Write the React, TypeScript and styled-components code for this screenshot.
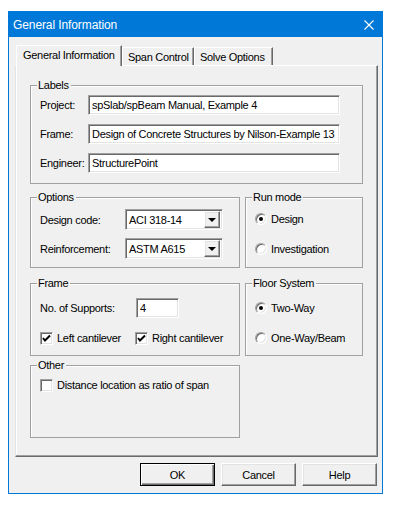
import React from 'react'
import styled, { createGlobalStyle, css } from 'styled-components'

const GlobalStyle = createGlobalStyle`
  body {
    margin: 0;
    background: #ffffff;
    font-family: "Liberation Sans", Arial, sans-serif;
  }
`

const sunken = css`
  box-sizing: border-box;
  border: 1px solid;
  border-color: #a0a0a0 #ffffff #ffffff #a0a0a0;
  box-shadow: inset 1px 1px 0 #696969, inset -1px -1px 0 #e3e3e3;
  background: #ffffff;
`

const raised = css`
  box-sizing: border-box;
  border: 1px solid;
  border-color: #ffffff #696969 #696969 #ffffff;
  box-shadow: inset -1px -1px 0 #a0a0a0, inset 1px 1px 0 #e3e3e3;
  background: #f0f0f0;
`

const Page = styled.div`
  padding: 11px 0 0 8px;
`

const Window = styled.div`
  width: 375px;
  height: 483px;
  box-sizing: border-box;
  border: 1px solid #0078d7;
  background: #f0f0f0;
  display: flex;
  flex-direction: column;
  font-size: 11px;
  letter-spacing: -0.3px;
  color: #000;
`

const TitleBar = styled.div`
  height: 25px;
  flex-shrink: 0;
  background: #0078d7;
  color: #fff;
  display: flex;
  align-items: center;
  justify-content: space-between;
  padding: 0 8px 0 4px;
  font-size: 12px;
  letter-spacing: -0.1px;
`

const Body = styled.div`
  padding: 8px 4px 0 6px;
  display: flex;
  flex-direction: column;
`

const TabStrip = styled.div`
  height: 20px;
  display: flex;
  align-items: flex-end;
  padding-left: 1px;
`

const Tab = styled.div<{ $active?: boolean }>`
  box-sizing: border-box;
  display: flex;
  align-items: center;
  border: 1px solid;
  border-bottom: none;
  border-color: #ffffff #696969 #696969 #ffffff;
  box-shadow: inset -1px 0 0 #a0a0a0;
  background: #f0f0f0;
  ${p => p.$active ? css`
    width: 106px;
    height: 21px;
    margin-bottom: -1px;
    padding: 0 0 2px 6px;
    position: relative;
    z-index: 1;
  ` : css`
    height: 18px;
    padding: 1px 0 0 5px;
  `}
`

const Panel = styled.div`
  height: 392px;
  box-sizing: border-box;
  border: 1px solid;
  border-color: #ffffff #696969 #696969 #e3e3e3;
  box-shadow: inset -1px -1px 0 #a0a0a0, inset 1px 0 0 #ffffff;
  padding: 19px 13px 0 14px;
  display: flex;
  flex-direction: column;
`

const GroupRow = styled.div<{ $top: number }>`
  display: flex;
  gap: 5px;
  margin-top: ${p => p.$top}px;
`

const Group = styled.div<{ $w: number; $h: number }>`
  box-sizing: border-box;
  width: ${p => p.$w}px;
  height: ${p => p.$h}px;
  border: 1px solid #a0a0a0;
  box-shadow: inset 1px 1px 0 #ffffff;
  padding: 0 8px 0 9px;
  display: flex;
  flex-direction: column;
`

const Caption = styled.div`
  align-self: flex-start;
  margin: -7px 0 0 -3px;
  padding: 0 2px 0 1px;
  height: 13px;
  line-height: 13px;
  background: #f0f0f0;
`

const Stack = styled.div<{ $top: number; $gap: number }>`
  display: flex;
  flex-direction: column;
  gap: ${p => p.$gap}px;
  margin-top: ${p => p.$top}px;
`

const Field = styled.div`
  display: flex;
  align-items: center;
`

const FieldLabel = styled.span<{ $w: number }>`
  width: ${p => p.$w}px;
  flex-shrink: 0;
`

const TextBox = styled.div<{ $w: number }>`
  ${sunken};
  width: ${p => p.$w}px;
  height: 20px;
  padding: 0 3px;
  display: flex;
  align-items: center;
  white-space: nowrap;
  overflow: hidden;
`

const Combo = styled.div`
  ${sunken};
  width: 98px;
  height: 21px;
  padding: 2px 2px 2px 3px;
  display: flex;
  align-items: center;
  justify-content: space-between;
`

const DropButton = styled.div`
  ${raised};
  width: 16px;
  height: 17px;
  display: flex;
  align-items: center;
  justify-content: center;
`

const Arrow = styled.div`
  width: 0;
  height: 0;
  border-left: 4px solid transparent;
  border-right: 4px solid transparent;
  border-top: 4px solid #000;
`

const Option = styled.label<{ $w?: number }>`
  display: flex;
  align-items: center;
  gap: 4px;
  height: 20px;
  ${p => p.$w && css`width: ${p.$w}px;`}
`

const Radio = styled.span<{ $on?: boolean }>`
  box-sizing: border-box;
  width: 12px;
  height: 12px;
  border-radius: 50%;
  border: 1px solid;
  border-color: #a0a0a0 #ffffff #ffffff #a0a0a0;
  box-shadow: inset 1px 1px 0 #696969, inset -1px -1px 0 #e3e3e3;
  background: #fff;
  display: flex;
  align-items: center;
  justify-content: center;
  &::after {
    content: '';
    width: 4px;
    height: 4px;
    border-radius: 50%;
    background: ${p => (p.$on ? '#000' : 'transparent')};
  }
`

const CheckBox = styled.span`
  ${sunken};
  width: 13px;
  height: 13px;
  display: flex;
  align-items: center;
  justify-content: center;
`

const CheckRow = styled.div`
  display: flex;
  align-items: center;
`

const ButtonBar = styled.div`
  display: flex;
  justify-content: flex-end;
  gap: 6px;
  margin-top: 6px;
  padding-right: 1px;
`

const Button = styled.div<{ $default?: boolean }>`
  ${raised};
  width: 75px;
  height: 23px;
  display: flex;
  align-items: center;
  justify-content: center;
  ${p => p.$default && css`
    border-color: #000;
    box-shadow: inset 1px 1px 0 #ffffff, inset -1px -1px 0 #696969, inset -2px -2px 0 #a0a0a0;
  `}
`

const Check = ({ on }: { on?: boolean }) => (
  <CheckBox>
    {on && (
      <svg width="9" height="9" viewBox="0 0 9 9">
        <path d="M1 4 L3 6.5 L8 1.5" stroke="#000" strokeWidth="2" fill="none" />
      </svg>
    )}
  </CheckBox>
)

const CloseIcon = () => (
  <svg width="10" height="10" viewBox="0 0 10 10">
    <path d="M0.5 0.5 L9.5 9.5 M9.5 0.5 L0.5 9.5" stroke="#fff" strokeWidth="1.1" />
  </svg>
)

export default function App() {
  return (
    <Page>
      <GlobalStyle />
      <Window>
        <TitleBar>
          <span>General Information</span>
          <CloseIcon />
        </TitleBar>
        <Body>
          <TabStrip>
            <Tab $active>General Information</Tab>
            <Tab style={{ width: 72 }}>Span Control</Tab>
            <Tab style={{ width: 79 }}>Solve Options</Tab>
          </TabStrip>
          <Panel>
            <Group $w={333} $h={99}>
              <Caption>Labels</Caption>
              <Stack $top={3} $gap={9}>
                <Field>
                  <FieldLabel $w={48}>Project:</FieldLabel>
                  <TextBox $w={252}>spSlab/spBeam Manual, Example 4</TextBox>
                </Field>
                <Field>
                  <FieldLabel $w={48}>Frame:</FieldLabel>
                  <TextBox $w={252}>Design of Concrete Structures by Nilson-Example 13</TextBox>
                </Field>
                <Field>
                  <FieldLabel $w={48}>Engineer:</FieldLabel>
                  <TextBox $w={252}>StructurePoint</TextBox>
                </Field>
              </Stack>
            </Group>

            <GroupRow $top={13}>
              <Group $w={210} $h={71}>
                <Caption>Options</Caption>
                <Stack $top={5} $gap={8}>
                  <Field>
                    <FieldLabel $w={85}>Design code:</FieldLabel>
                    <Combo>
                      <span>ACI 318-14</span>
                      <DropButton><Arrow /></DropButton>
                    </Combo>
                  </Field>
                  <Field>
                    <FieldLabel $w={85}>Reinforcement:</FieldLabel>
                    <Combo>
                      <span>ASTM A615</span>
                      <DropButton><Arrow /></DropButton>
                    </Combo>
                  </Field>
                </Stack>
              </Group>
              <Group $w={118} $h={71}>
                <Caption>Run mode</Caption>
                <Stack $top={5} $gap={10}>
                  <Option><Radio $on />Design</Option>
                  <Option><Radio />Investigation</Option>
                </Stack>
              </Group>
            </GroupRow>

            <GroupRow $top={15}>
              <Group $w={210} $h={73}>
                <Caption>Frame</Caption>
                <Stack $top={8} $gap={10}>
                  <Field>
                    <FieldLabel $w={96}>No. of Supports:</FieldLabel>
                    <TextBox $w={43}>4</TextBox>
                  </Field>
                  <CheckRow>
                    <Option $w={95}><Check on />Left cantilever</Option>
                    <Option><Check on />Right cantilever</Option>
                  </CheckRow>
                </Stack>
              </Group>
              <Group $w={118} $h={73}>
                <Caption>Floor System</Caption>
                <Stack $top={8} $gap={10}>
                  <Option><Radio $on />Two-Way</Option>
                  <Option><Radio />One-Way/Beam</Option>
                </Stack>
              </Group>
            </GroupRow>

            <GroupRow $top={9}>
              <Group $w={210} $h={73}>
                <Caption>Other</Caption>
                <Stack $top={3} $gap={0}>
                  <Option><Check />Distance location as ratio of span</Option>
                </Stack>
              </Group>
            </GroupRow>
          </Panel>
          <ButtonBar>
            <Button $default>OK</Button>
            <Button>Cancel</Button>
            <Button>Help</Button>
          </ButtonBar>
        </Body>
      </Window>
    </Page>
  )
}
